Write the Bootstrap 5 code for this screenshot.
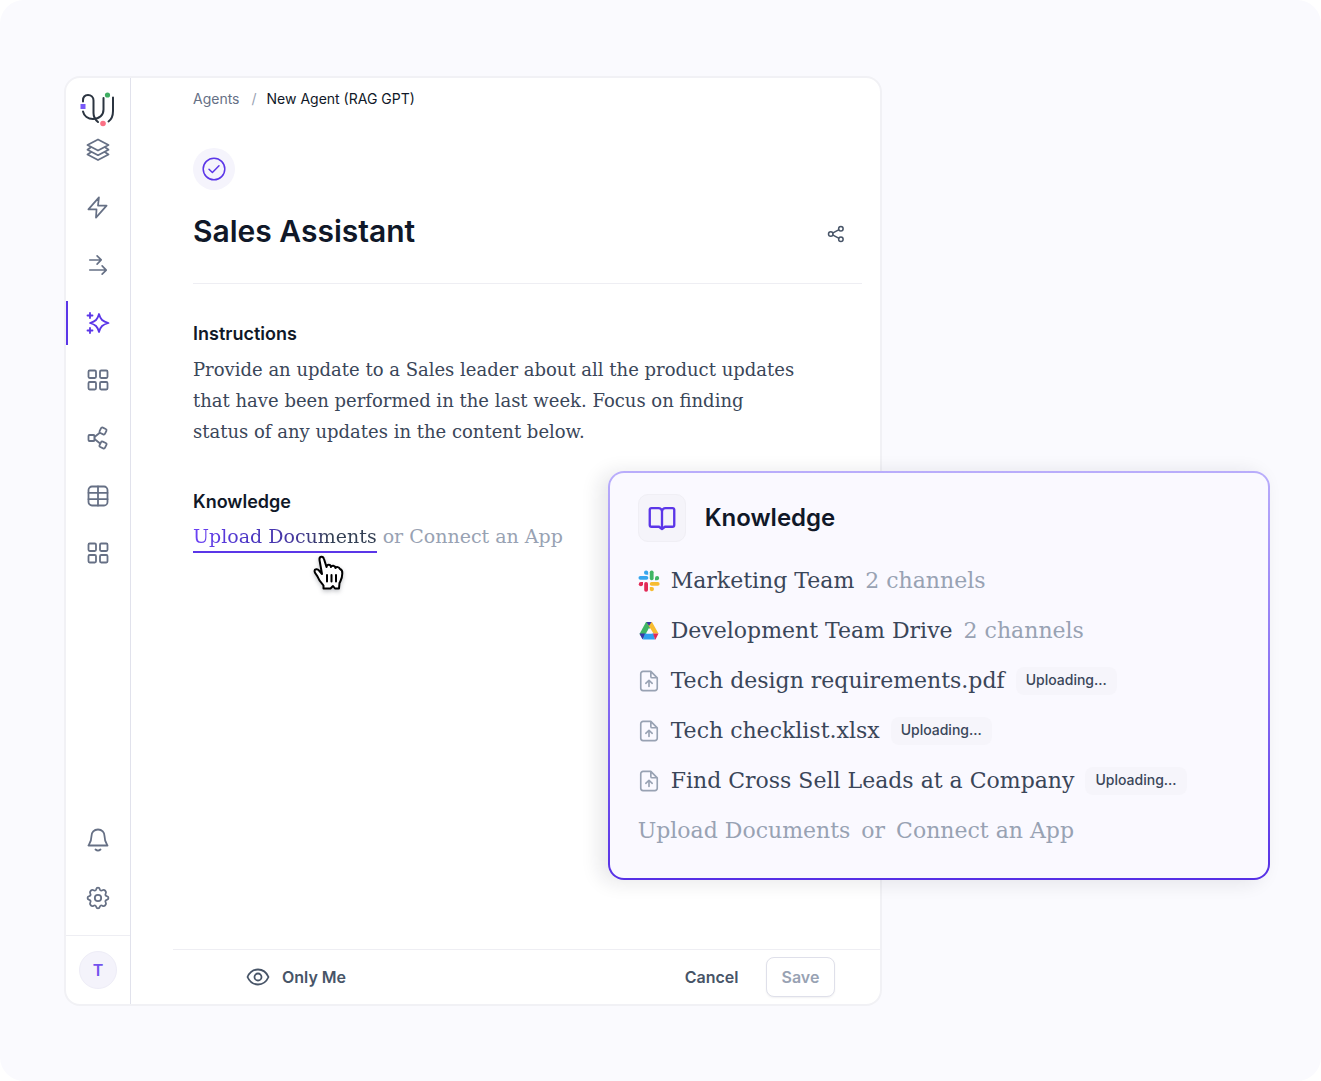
<!DOCTYPE html>
<html lang="en">
<head>
<meta charset="utf-8">
<meta name="viewport" content="width=device-width, initial-scale=1">
<title>Sales Assistant</title>
<link href="https://cdn.jsdelivr.net/npm/bootstrap@5.3.0/dist/css/bootstrap.min.css" rel="stylesheet">
<style>
:root{--ink:#101828;--slate:#3a4659;--muted:#667085;--faint:#98a2b3;--brand:#5b36e8;--line:#eeeef3}
body{background:#fff;font-family:Inter,"Liberation Sans",sans-serif;color:var(--ink)}
.stage{background:#fafafe;border-radius:24px;min-height:100vh;padding:76px 52px 75px 64px}
.panel{width:calc(68% - 1px);min-height:calc(100vh - 151px);background:#fff;border:2px solid #f1f1f5;border-radius:16px}
.rail{width:65px;border-right:1px solid #e1e2ec}
.rail-logo{height:43px}
.rail-logo svg{margin-bottom:-6px}
.rail-nav{display:grid;grid-auto-rows:1fr}
.rail-top{height:461px}
.rail-low{height:116px}
.rail-link{display:flex;align-items:center;justify-content:center;color:var(--muted);border-left:2px solid transparent;padding-right:3px;margin:7px 0}
.rail-link.active{color:var(--brand);border-left-color:var(--brand)}
.rail-user{height:69px;border-top:1px solid var(--line)}
.avatar{width:38px;height:38px;background:#f4f3fb;border:1px solid #eeedf7;color:#7352ee;font-size:16px;font-weight:600}
svg{display:block;flex:none}
.ico{fill:none;stroke:currentColor;stroke-width:2;stroke-linecap:round;stroke-linejoin:round}
.thin{stroke-width:1.800}
.hair{stroke-width:1.500}
.work{padding:10px 18px 0 62px}
.crumbs{font-size:14px;line-height:22px}
.crumbs a{color:var(--muted)}
.crumbs .breadcrumb-item+.breadcrumb-item{padding-left:12px}
.crumbs .breadcrumb-item+.breadcrumb-item::before{padding-right:10px;color:var(--faint)}
.crumbs .breadcrumb-item.active{color:var(--ink)}
.status{width:42px;height:42px;background:#f5f4fc;color:var(--brand);margin-top:38px}
.heading{margin-top:19px;padding-bottom:30px;border-bottom:1px solid var(--line)}
.heading h1{font-size:30px;line-height:44px;font-weight:600}
.share{color:#475467;padding:6px 17px 0 0}
.sec{font-size:18px;line-height:24px;font-weight:600}
.sec-a{margin-top:38px}
.sec-b{margin-top:43px}
.serif{font-family:"DejaVu Serif","Liberation Serif",serif;color:var(--slate)}
.copy{font-size:18px;line-height:31px}
.choice{font-size:19px;line-height:29px;color:var(--faint);gap:6px}
.choice a{color:var(--faint)}
.pick{position:relative;border-bottom:2px solid var(--brand)}
.pick span{background:linear-gradient(90deg,#6d42f7 0%,#4a35c4 30%,#46389f 55%,#344054 75%);-webkit-background-clip:text;background-clip:text;color:transparent}
.hand{position:absolute;left:120px;top:33px;filter:drop-shadow(0 2px 2px rgba(16,24,40,.25))}
.actions{height:55px;margin-left:42px;padding:0 45px 0 73px;border-top:1px solid var(--line)}
.actions .btn{font-size:16px;font-weight:600;line-height:24px;color:#475467;padding:7px 15px}
.actions .btn-save{color:var(--faint);border:1px solid #dfe0ea;opacity:1;box-shadow:0 1px 2px rgba(16,24,40,.06);background:#fff;border-radius:8px}
.sources{position:absolute;top:471px;right:51px;left:46%;border:2px solid transparent;border-radius:16px;padding:21px 28px 22px;background:linear-gradient(#faf9ff,#faf9ff) padding-box,linear-gradient(#b9adfb,#8a72f3 50%,#5630e6) border-box;box-shadow:-8px 2px 20px rgba(30,30,50,.11)}
.book{width:48px;height:48px;background:#f5f4fa;border:1px solid #f0eff5;border-radius:10px;color:var(--brand)}
.book-head{gap:19px;margin-bottom:14px}
.sources h2{font-size:24px;font-weight:600;line-height:32px}
.source{height:50px;font-size:22px;line-height:32px;gap:11px}
.source small,.source a{font-size:22px;color:var(--faint)}
.source .ico{color:var(--faint)}
.state{font:500 14px/26px Inter,"Liberation Sans",sans-serif;background:#f6f5fb;border-radius:8px;padding:0 10px;height:28px}
</style>
</head>
<body>
<svg width="0" height="0" class="position-absolute" aria-hidden="true">
<symbol id="grid" viewBox="0 0 24 24"><rect x="2.500" y="2.500" width="7.500" height="7.500" rx="1.200"/><rect x="14" y="2.500" width="7.500" height="7.500" rx="1.200"/><rect x="2.500" y="14" width="7.500" height="7.500" rx="1.200"/><rect x="14" y="14" width="7.500" height="7.500" rx="1.200"/></symbol>
<symbol id="file" viewBox="0 0 24 24"><path d="M14 1.500H5.500a2.500 2.500 0 0 0-2.500 2.500v16a2.500 2.500 0 0 0 2.500 2.500h13a2.500 2.500 0 0 0 2.500-2.500V8.500zM14 1.500v5.500a1.500 1.500 0 0 0 1.500 1.500H21M12 18v-6.500M8.500 14.500 12 11.200l3.500 3.300"/></symbol>
</svg>
<div class="stage position-relative">
<div class="panel d-flex">
<aside class="rail d-flex flex-column flex-shrink-0">
<div class="rail-logo d-flex align-items-end justify-content-center">
<svg width="36" height="36" viewBox="0 0 36 36" fill="none" stroke="#2b3440" stroke-width="2" stroke-linecap="round"><path d="M3 10.500V9.500C3 6 5 4 8 4s5.500 2 5.500 5.500v12.500c0 4 1.500 6.500 4.500 9"/><path d="M3 20.500C4 25 8 28 13 28c6.500 0 10.500-4 10.500-9.500V7"/><path d="M33 6.500V20c0 5-1 8-4.500 10.500"/><rect x="0.500" y="13" width="5" height="5" fill="#7a5af8" stroke="none"/><circle cx="27.500" cy="4" r="2.600" fill="#3fae62" stroke="none"/><circle cx="23" cy="32.500" r="2.800" fill="#fb7185" stroke="none"/></svg>
</div>
<nav class="rail-nav rail-top" aria-label="Main">
<a class="rail-link" href="#" aria-label="Layers"><svg class="ico thin" width="24" height="24" viewBox="0 0 24 24"><path d="M12 1.500 1.500 7 12 12.500 22.500 7zM4.500 9.500l-3 2.300L12 17.200l10.500-5.400-3-2.300M4.500 14.500l-3 2L12 22l10.500-5.500-3-2"/></svg></a>
<a class="rail-link" href="#" aria-label="Triggers"><svg class="ico thin" width="23" height="23" viewBox="0 0 24 24"><path d="M13.500 1.500 2.500 14H11l-.6 8.500L21.500 10h-9z"/></svg></a>
<a class="rail-link" href="#" aria-label="Flows"><svg class="ico thin" width="22" height="22" viewBox="0 0 24 24"><path d="M3 6.500h12M11 2l4.500 4.500L11 11M3 17.500h18M16.500 13l4.500 4.500-4.500 4.500"/></svg></a>
<a class="rail-link active" href="#" aria-label="Agents" aria-current="page"><svg class="ico thin" width="24" height="24" viewBox="0 0 24 24"><path d="M13 3c1.500 5.500 3.500 7.500 9.500 9-6 1.500-8 3.500-9.500 9-1.500-5.500-3.500-7.500-9-9 5.500-1.500 7.500-3.500 9-9zM4 2v5M1.500 4.500h5M4 17v5M1.500 19.500h5"/></svg></a>
<a class="rail-link" href="#" aria-label="Apps"><svg class="ico thin" width="24" height="24"><use href="#grid"/></svg></a>
<a class="rail-link" href="#" aria-label="Connections"><svg class="ico thin" width="24" height="24" viewBox="0 0 24 24"><rect x="2.500" y="9" width="6" height="6" rx="1"/><rect x="14" y="2" width="6" height="6" rx="1.400" transform="rotate(25 17 5)"/><rect x="14" y="16" width="6" height="6" rx="1.400" transform="rotate(-65 17 19)"/><path d="m8.500 11 5-4M8.500 13l5 4"/></svg></a>
<a class="rail-link" href="#" aria-label="Tables"><svg class="ico thin" width="24" height="24" viewBox="0 0 24 24"><rect x="2.500" y="2.500" width="19" height="19" rx="3.500"/><path d="M2.500 8.800h19M2.500 15.200h19M12 2.500v19"/></svg></a>
<a class="rail-link" href="#" aria-label="More apps"><svg class="ico thin" width="24" height="24"><use href="#grid"/></svg></a>
</nav>
<nav class="rail-nav rail-low mt-auto mb-2" aria-label="Account">
<a class="rail-link" href="#" aria-label="Notifications"><svg class="ico thin" width="24" height="24" viewBox="0 0 24 24"><path d="M12 1.500c-4 0-6.500 2.800-6.500 6.500 0 5-1.500 7-3 9.500h19c-1.500-2.500-3-4.500-3-9.500 0-3.700-2.500-6.500-6.500-6.500zM9.500 21.500c1.500 1.300 3.500 1.300 5 0"/></svg></a>
<a class="rail-link" href="#" aria-label="Settings"><svg class="ico thin" width="24" height="24" viewBox="0 0 24 24"><circle cx="12" cy="12" r="3.200"/><path d="M10.200 3.200c.5-2.200 3.100-2.200 3.600 0 .4 1.400 1.400 1.800 2.600 1.100 2-1.200 4.500 1.300 3.300 3.300-.7 1.200-.3 2.200 1.100 2.600 2.200.5 2.200 3.100 0 3.600-1.400.4-1.800 1.400-1.100 2.600 1.200 2-1.300 4.500-3.300 3.300-1.200-.7-2.200-.3-2.600 1.100-.5 2.200-3.100 2.200-3.600 0-.4-1.400-1.400-1.800-2.600-1.100-2 1.200-4.500-1.300-3.300-3.300.7-1.200.3-2.200-1.100-2.600-2.200-.5-2.200-3.100 0-3.600 1.400-.4 1.800-1.400 1.100-2.600-1.200-2 1.300-4.500 3.300-3.300 1.200.7 2.200.3 2.600-1.100z"/></svg></a>
</nav>
<div class="rail-user d-flex align-items-center justify-content-center"><span class="avatar rounded-circle d-flex align-items-center justify-content-center">T</span></div>
</aside>
<div class="flex-grow-1 d-flex flex-column">
<main class="work flex-grow-1">
<nav aria-label="Breadcrumb"><ol class="breadcrumb crumbs mb-0"><li class="breadcrumb-item"><a class="text-decoration-none" href="#">Agents</a></li><li class="breadcrumb-item active" aria-current="page">New Agent (RAG GPT)</li></ol></nav>
<div class="status rounded-circle d-flex align-items-center justify-content-center"><svg class="ico hair" width="24" height="24" viewBox="0 0 24 24"><circle cx="12" cy="12" r="10.800"/><path d="m7 12.200 3.400 3.300 6.600-6.700"/></svg></div>
<div class="heading d-flex align-items-center justify-content-between">
<h1 class="mb-0">Sales Assistant</h1>
<button type="button" class="btn border-0 share" aria-label="Share"><svg class="ico" width="18" height="18" viewBox="0 0 24 24"><circle cx="5" cy="12" r="3"/><circle cx="18.500" cy="5" r="3"/><circle cx="18.500" cy="19" r="3"/><path d="m8 10.500 7.500-4M8 13.500l7.500 4"/></svg></button>
</div>
<h2 class="sec sec-a mb-2">Instructions</h2>
<p class="serif copy mb-0">Provide an update to a Sales leader about all the product updates<br>that have been performed in the last week. Focus on finding<br>status of any updates in the content below.</p>
<h2 class="sec sec-b mb-2">Knowledge</h2>
<div class="serif choice d-flex align-items-start"><a class="pick text-decoration-none" href="#"><span>Upload Documents</span><svg class="hand" width="31" height="36" viewBox="0 0 31 36" fill="#fff" stroke="#000" stroke-width="2" stroke-linejoin="round" stroke-linecap="round"><path d="M10.500 33.500v-3c-2-2.500-4.500-5-5.500-8-.8-2.500-3.500-4-3.500-6.500 0-2 3-2.500 4.500-.5l3 3.500L6.500 5c-.5-4 3.500-4.500 4.500-1l2.500 8c.5-3 4-3 4.500 0 .8-2 4-1.800 4.500 1 1-1.500 3.500-1.200 4.500 1 1.500.5 2.500 2 2.300 4.500 0 5-1.300 6.500-2.800 9.500l-.5 5.500h-4l-2-2.500-2.500 2.500z"/><path d="M14 20v6.500M18.500 20v6.500M23 20v6.500"/></svg></a><span>or</span><a class="text-decoration-none" href="#">Connect an App</a></div>
</main>
<footer class="actions d-flex align-items-center justify-content-between">
<button type="button" class="btn border-0 p-0 d-flex align-items-center gap-2"><svg class="ico thin me-1" width="24" height="24" viewBox="0 0 24 24"><path d="M1.500 12C3.500 7.500 7.500 4.500 12 4.500s8.500 3 10.500 7.500c-2 4.500-6 7.500-10.500 7.500S3.500 16.500 1.500 12z"/><circle cx="12" cy="12" r="3.500"/></svg>Only Me</button>
<div class="d-flex gap-2"><button type="button" class="btn border-0 me-1">Cancel</button><button type="button" class="btn btn-save" disabled>Save</button></div>
</footer>
</div>
</div>
<section class="sources" aria-labelledby="src-title">
<div class="book-head d-flex align-items-center">
<span class="book d-flex align-items-center justify-content-center"><svg class="ico" width="28" height="28" viewBox="0 0 24 24"><path d="M12 6.500a3 3 0 0 0-3-3H3a1.500 1.500 0 0 0-1.500 1.500v13A1.500 1.500 0 0 0 3 19.500h6.500L12 21.500l2.500-2H21a1.500 1.500 0 0 0 1.500-1.500V5A1.500 1.500 0 0 0 21 3.500h-6a3 3 0 0 0-3 3zM12 6.500v15"/></svg></span>
<h2 id="src-title" class="mb-0">Knowledge</h2>
</div>
<div class="serif">
<div class="source d-flex align-items-center"><svg width="22" height="22" viewBox="0 0 22 22"><g fill="#36a6ee"><rect x="0.500" y="6" width="9.800" height="3.800" rx="1.800"/><path d="M10.200 4.800V2.600A2.100 2.100 0 1 0 8.100 4.800z"/></g><g fill="#3fb565"><rect x="11.800" y="0.500" width="3.800" height="9.800" rx="1.800"/><path d="M17 10.200h2.300a2.100 2.100 0 1 0-2.300-2.200z"/></g><g fill="#f7bc31"><rect x="11.800" y="12" width="9.800" height="3.800" rx="1.800"/><path d="M11.800 17v2.300a2.100 2.100 0 1 0 2.200-2.300z"/></g><g fill="#e22b57"><rect x="6.200" y="12" width="3.800" height="9.800" rx="1.800"/><path d="M5 12H2.800A2.100 2.100 0 1 0 5 14.200z"/></g></svg><span>Marketing Team</span><small>2 channels</small></div>
<div class="source d-flex align-items-center"><svg width="22" height="22" viewBox="0 0 22 22"><path fill="#3fb565" d="M8 2h3l2 4.500L5 19 1.500 14z"/><path fill="#f7bc31" d="M11 2h3l6.500 11.500h-5L9.500 4z"/><path fill="#2f9ff0" d="M6.500 13.500h9l1.500 6H5z"/><path fill="#e22b57" d="M15 13.500h5.500L17.500 19.500H17z"/><path fill="#3b36a8" d="M1.500 13.500H7l-2.500 6zM8.500 2h5L11 6z"/><path fill="#faf9ff" d="m11 8 3 5.500H8z"/></svg><span>Development Team Drive</span><small>2 channels</small></div>
<div class="source d-flex align-items-center"><svg class="ico thin" width="22" height="24"><use href="#file"/></svg><span>Tech design requirements.pdf</span><span class="state">Uploading...</span></div>
<div class="source d-flex align-items-center"><svg class="ico thin" width="22" height="24"><use href="#file"/></svg><span>Tech checklist.xlsx</span><span class="state">Uploading...</span></div>
<div class="source d-flex align-items-center"><svg class="ico thin" width="22" height="24"><use href="#file"/></svg><span>Find Cross Sell Leads at a Company</span><span class="state">Uploading...</span></div>
<div class="source d-flex align-items-center"><a class="text-decoration-none" href="#">Upload Documents</a><small>or</small><a class="text-decoration-none" href="#">Connect an App</a></div>
</div>
</section>
</div>
<script src="https://cdn.jsdelivr.net/npm/bootstrap@5.3.0/dist/js/bootstrap.bundle.min.js"></script>
</body>
</html>
